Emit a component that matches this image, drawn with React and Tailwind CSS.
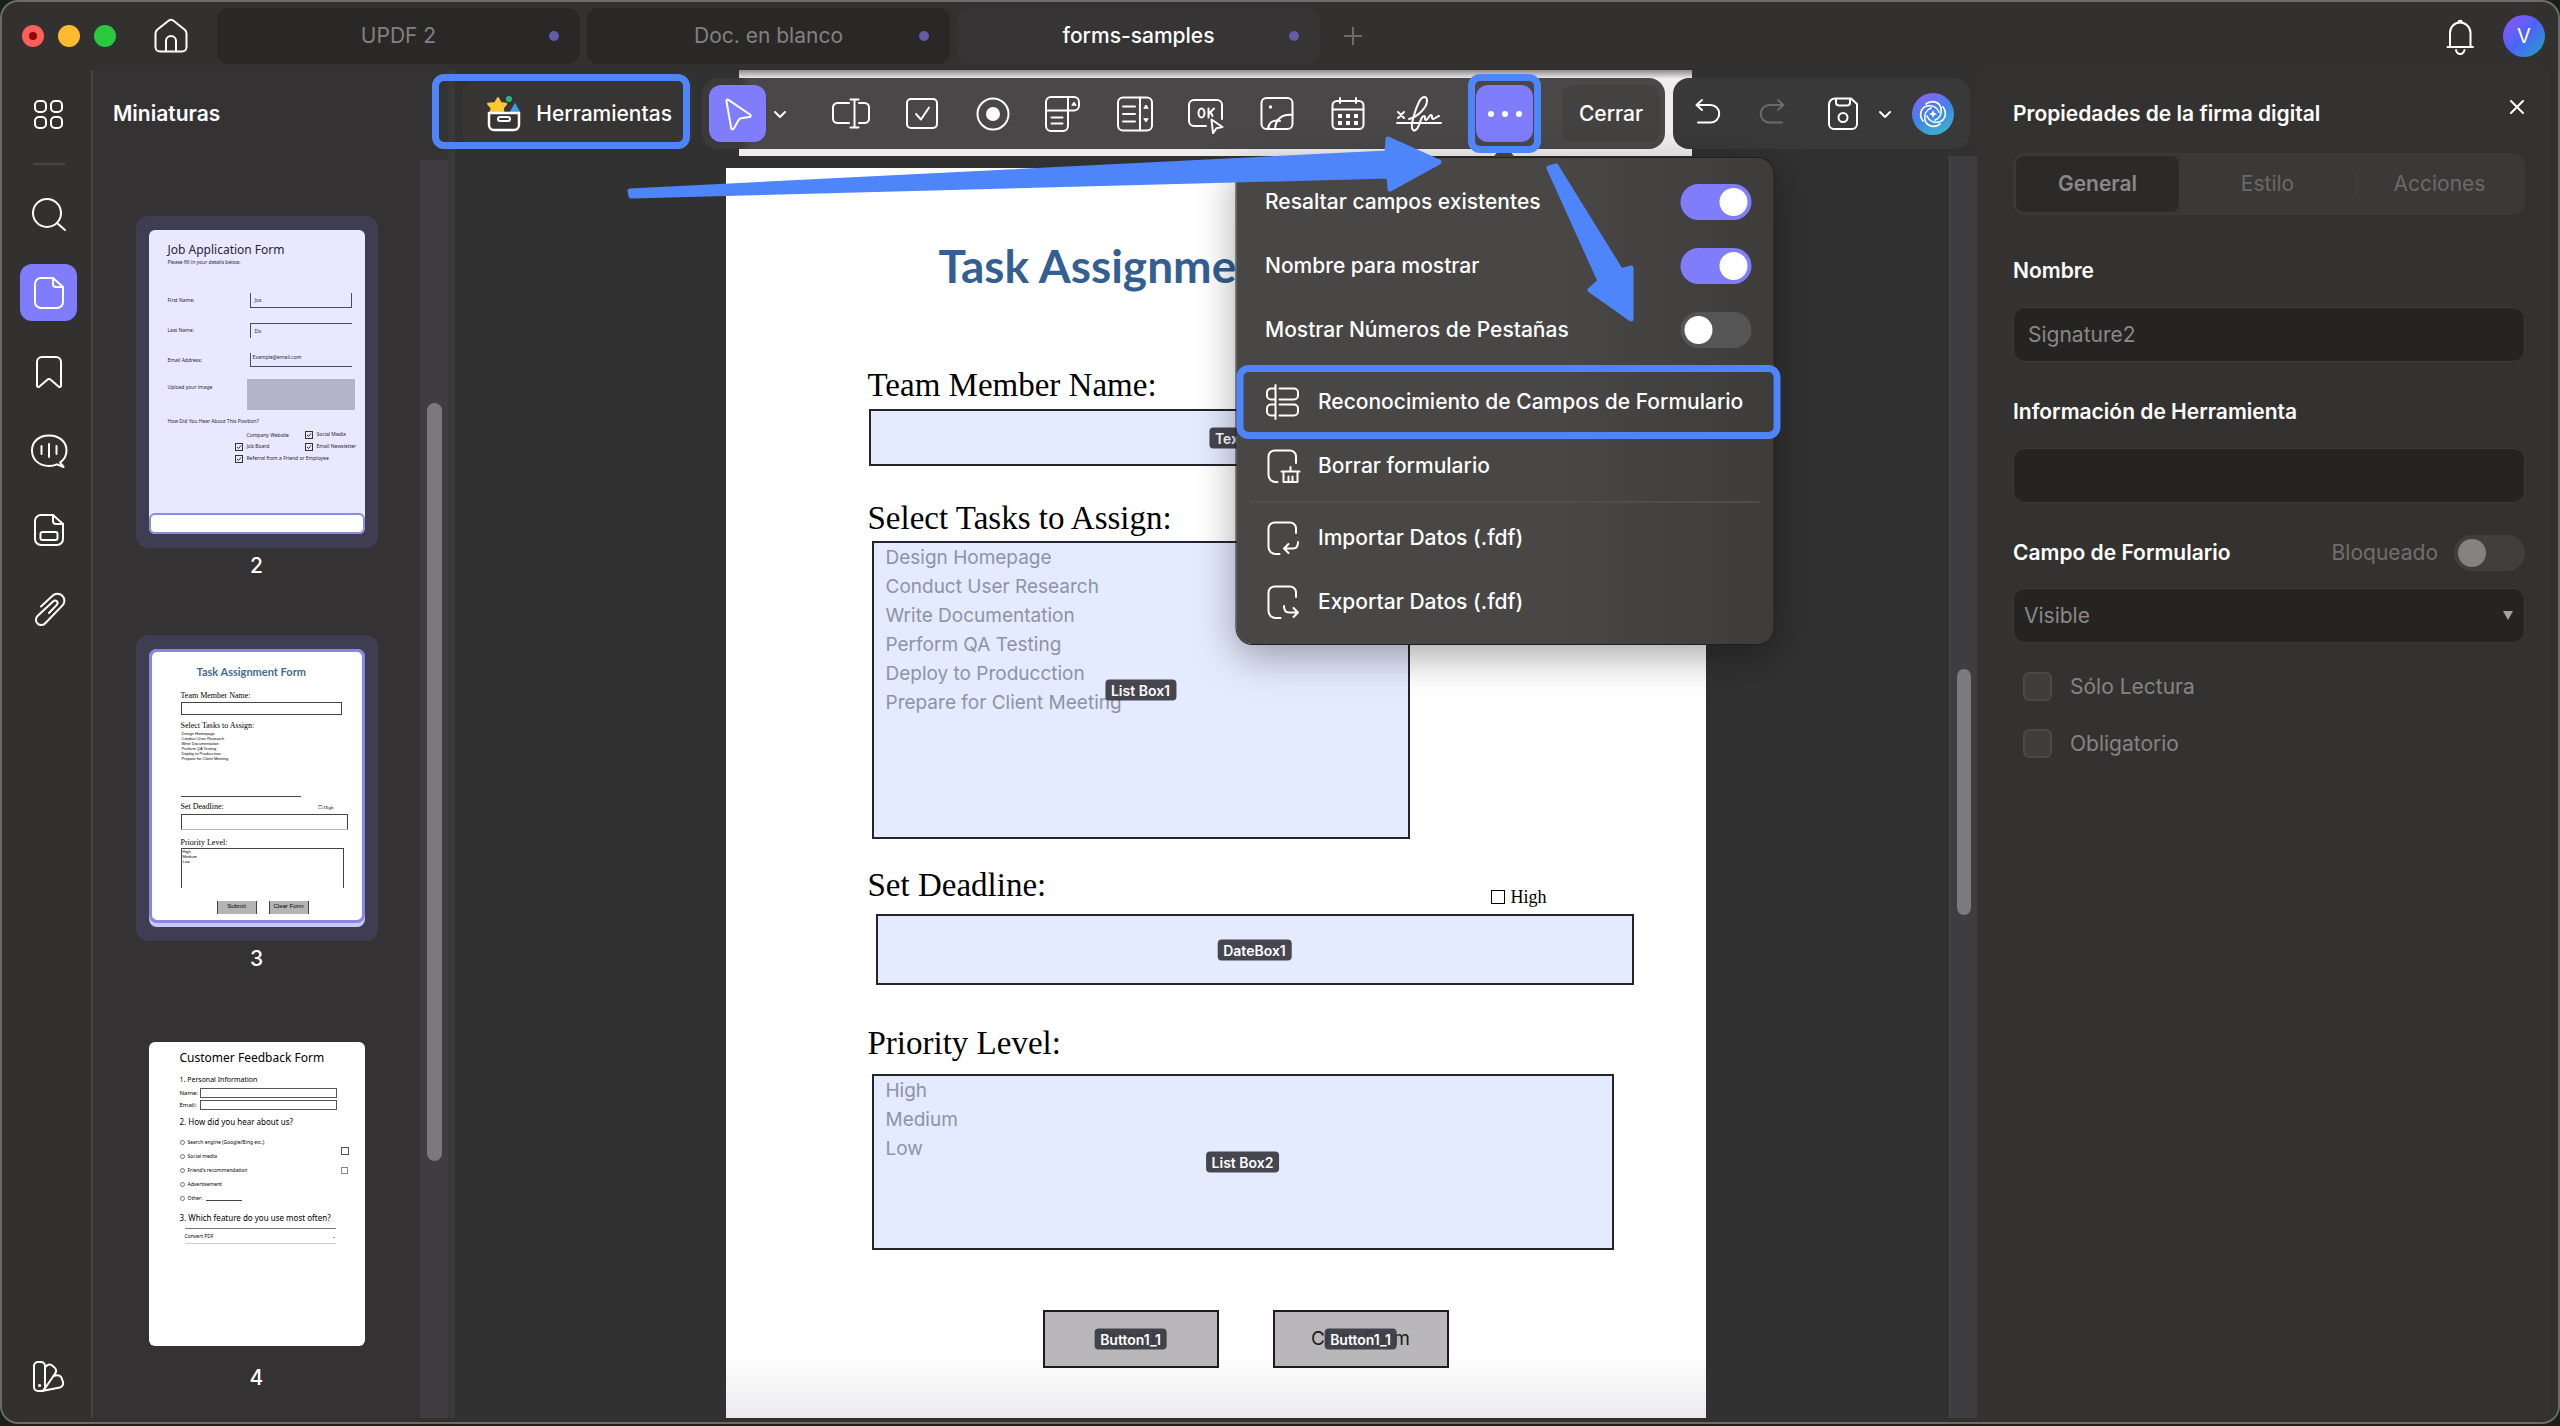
import React, { useState } from 'react';

const Icon = ({ children, className = 'w-10 h-10', strokeWidth = 2 }) => (
  <svg
    viewBox="0 0 40 40"
    className={className}
    fill="none"
    stroke="currentColor"
    strokeWidth={strokeWidth}
    strokeLinecap="round"
    strokeLinejoin="round"
    aria-hidden="true"
  >
    {children}
  </svg>
);

const HomeIcon = () => (
  <Icon>
    <path d="M4.500 17.500c0-1.500.6-2.800 1.700-3.800L17.500 4.800c1.500-1.200 3.500-1.200 5 0l11.300 8.900c1.100 1 1.700 2.300 1.700 3.800V31c0 2.800-2 4.500-4.500 4.500H9c-2.500 0-4.500-1.700-4.500-4.500z" />
    <path d="M15 35.500V25a5 5 0 0 1 10 0v10.500" />
  </Icon>
);

const GridIcon = () => (
  <Icon>
    <rect x="6" y="6" width="11" height="11" rx="4" />
    <rect x="22" y="6" width="11" height="11" rx="4" />
    <rect x="6" y="22" width="11" height="11" rx="4" />
    <rect x="22" y="22" width="11" height="11" rx="4" />
  </Icon>
);

const SearchIcon = () => (
  <Icon>
    <circle cx="18" cy="19" r="14" />
    <path d="M28 29l8 7" />
  </Icon>
);

const PageIcon = () => (
  <Icon>
    <path d="M24 5H12a6 6 0 0 0-6 6v18a6 6 0 0 0 6 6h16a6 6 0 0 0 6-6V14z" />
    <path d="M24 5v6a3 3 0 0 0 3 3h7" />
  </Icon>
);

const BookmarkIcon = () => (
  <Icon>
    <path d="M8 10a5 5 0 0 1 5-5h14a5 5 0 0 1 5 5v23.500c0 1.500-1.200 2-2.200 1.200L22 28c-1.300-1.200-2.700-1.200-4 0l-7.800 6.700c-1 .8-2.200.3-2.200-1.200z" />
  </Icon>
);

const CommentIcon = () => (
  <Icon>
    <path d="M31 31.500c3.800-2.600 6.500-7 6.500-12C37.500 10.500 30 4.500 20 4.500S3 10.500 3 19.500 10 35 20 35c2.800 0 5.500-.6 8-1.700L34.500 36c-.8-1.500-2.500-3-3.500-4.500z" />
    <path d="M12.500 15v8M20 13v13M27.500 15v8" />
  </Icon>
);

const FieldPageIcon = () => (
  <Icon>
    <path d="M24 5H12a6 6 0 0 0-6 6v18a6 6 0 0 0 6 6h16a6 6 0 0 0 6-6V14z" />
    <path d="M24 5v6a3 3 0 0 0 3 3h7" />
    <rect x="11.500" y="22" width="17" height="8" rx="2" />
  </Icon>
);

const ClipIcon = () => (
  <Icon>
    <path d="M12 17.500L23.500 6.800a7 7 0 0 1 9.800 0c2.800 2.800 2.800 7 0 9.800L16 34.500a5.200 5.200 0 0 1-7.500 0 5.200 5.200 0 0 1 0-7.500L24 12.500c1.200-1.200 2.800-1.200 3.800-.2s1 2.600-.2 3.800L20 24" />
  </Icon>
);

const SwatchIcon = () => (
  <Icon>
    <rect x="5" y="5" width="11" height="29" rx="4" />
    <path d="M16 10.500c3-3.800 5.500-3.600 7.500-1.800l2.300 2.200c1.800 1.800 1.700 3.800.2 5.800L14.500 33.500" />
    <path d="M24.500 19c4-1.500 7-.8 8.200 2.200l1.200 3.500c.9 2.800-.5 5-3 5.800L13 34" />
    <path d="M10.500 28.500h.1" strokeWidth="3" />
  </Icon>
);

const BellIcon = () => (
  <Icon>
    <path d="M10 31V17c0-6 4.500-10.500 10-10.500S30.500 11 30.500 17v14M7.500 31H33" />
    <path d="M16 34c.5 2.500 2 4 4.200 4s3.700-1.500 4.300-4M18.500 6.500a1.700 1.700 0 1 1 3.500 0" />
  </Icon>
);

const ToolboxIcon = () => (
  <svg viewBox="0 0 40 40" className="w-10 h-10" fill="none" aria-hidden="true">
    <path d="M14 4l2.600 5 5.600.8-3.400 4.200.6 4.500H6.500l1.200-4.500L4 9.800 11.200 9z" fill="#ffc832" stroke="#ffc832" strokeWidth="2" strokeLinejoin="round" />
    <circle cx="25" cy="5" r="3" fill="#2fb58b" />
    <path d="M31 9.500l5 9H26z" fill="#3f9be8" stroke="#3f9be8" strokeWidth="1" strokeLinejoin="round" />
    <path d="M5 19h30v12a5 5 0 0 1-5 5H10a5 5 0 0 1-5-5z" fill="#363534" stroke="#fff" strokeWidth="2.500" strokeLinejoin="round" />
    <rect x="14" y="23" width="12" height="4" rx="2" stroke="#fff" strokeWidth="2" />
  </svg>
);

const CursorIcon = () => (
  <Icon>
    <path d="M8.500 7.500c-.4-1.500.6-2.300 1.900-1.700L32 20.500c1.200.9.9 2.300-.6 2.500l-8.400 1.300c-1 .1-1.700.6-2.200 1.400l-5 8.800c-.8 1.400-2.300 1.200-2.600-.4z" />
  </Icon>
);

const TextFieldIcon = () => (
  <Icon>
    <path d="M18 9H6.500A4.500 4.500 0 0 0 2 13.500v11A4.500 4.500 0 0 0 6.500 29H18M28 9h5.500a4.500 4.500 0 0 1 4.500 4.500v11a4.500 4.500 0 0 1-4.500 4.500H28M23.500 6v27M19.500 5.500h8M19.500 33.500h8" />
  </Icon>
);

const CheckFieldIcon = () => (
  <Icon>
    <rect x="5" y="5" width="30" height="29" rx="4" />
    <path d="M14 20l5 5.500L27 13.500" />
  </Icon>
);

const RadioFieldIcon = () => (
  <Icon>
    <circle cx="20" cy="20" r="15.500" />
    <circle cx="20" cy="20" r="7" fill="currentColor" stroke="none" />
  </Icon>
);

const ComboIcon = () => (
  <Icon>
    <path d="M24 16.500V32a5 5 0 0 1-5 5H7a5 5 0 0 1-5-5V8a5 5 0 0 1 5-5h23a5 5 0 0 1 5 5v3.500a5 5 0 0 1-5 5H2M24 3v13.500M7.500 23.500h11M7.500 29.500h11" />
    <path d="M28 11l2-3 2 3z" fill="currentColor" strokeWidth="1" />
  </Icon>
);

const ListIcon = () => (
  <Icon>
    <rect x="3" y="3.500" width="34" height="33" rx="5" />
    <path d="M25 3.500v33M8 12.500h12M8 20h12M8 27.500h12" />
    <path d="M29 14l2-3 2 3zM29 25l2 3 2-3z" fill="currentColor" strokeWidth="1" />
  </Icon>
);

const ButtonFieldIcon = () => (
  <Icon>
    <path d="M20 32H8a5 5 0 0 1-5-5V11a5 5 0 0 1 5-5h23a5 5 0 0 1 5 5v14" />
    <ellipse cx="15.500" cy="19" rx="3" ry="4.500" />
    <path d="M22.500 14.500v9M28 14.500l-5 5M24.500 18l2 4" />
    <path d="M25.500 25.500l11 7.500-6 1.200-3.500 5z" />
  </Icon>
);

const ImageFieldIcon = () => (
  <Icon>
    <rect x="4.500" y="4" width="31" height="31" rx="5" />
    <path d="M11 35c.5-6.500 5-9.500 12-8M18 35c.6-10 7-15 17.500-14" />
    <circle cx="13.500" cy="13" r="1.700" fill="currentColor" stroke="none" />
  </Icon>
);

const CalendarIcon = () => (
  <Icon>
    <rect x="4.500" y="7" width="31" height="28" rx="4.500" />
    <path d="M4.500 15.500h31M12 4v5M28 4v5" />
    <g fill="currentColor" stroke="none">
      <rect x="10" y="20" width="4" height="4" />
      <rect x="18" y="20" width="4" height="4" />
      <rect x="26" y="20" width="4" height="4" />
      <rect x="10" y="27" width="4" height="4" />
      <rect x="18" y="27" width="4" height="4" />
      <rect x="26" y="27" width="4" height="4" />
    </g>
  </Icon>
);

const SignatureIcon = () => (
  <svg viewBox="0 0 48 40" className="w-12 h-10" fill="none" stroke="currentColor" strokeWidth="2" strokeLinecap="round" strokeLinejoin="round" aria-hidden="true">
    <path d="M2 29h44M3 18l6 6M9 18l-6 6" />
    <path d="M14 25c9-2 18-12 18-18 0-6-5-5-8 1-4 8-8 22-7 26s5 3 7-3 3-9 5-9 0 4 2 4 3-5 5-5 0 4 2 4 3-2 6-3" />
  </svg>
);

const UndoIcon = () => (
  <Icon>
    <path d="M14 6l-5.500 5L14 16M9 11h13.500a8.500 8.500 0 0 1 0 17.500H10" />
  </Icon>
);

const RedoIcon = () => (
  <Icon>
    <path d="M26 6l5.500 5L26 16M31 11H17.500a8.500 8.500 0 0 0 0 17.500H30" />
  </Icon>
);

const SaveIcon = () => (
  <Icon>
    <path d="M12 4.500h16l6 5.500v20a5 5 0 0 1-5 5H11a5 5 0 0 1-5-5V10.500a6 6 0 0 1 6-6z" />
    <path d="M13 5v3.500a3 3 0 0 0 3 3h8a3 3 0 0 0 3-3V5" />
    <circle cx="20" cy="23.500" r="4.500" />
  </Icon>
);

const ChevronIcon = () => (
  <svg viewBox="0 0 16 16" className="w-4 h-4" fill="none" stroke="currentColor" strokeWidth="2" strokeLinecap="round" strokeLinejoin="round" aria-hidden="true">
    <path d="M3 6l5 5 5-5" />
  </svg>
);

const RecognizeIcon = () => (
  <Icon>
    <path d="M13 3v34M12 6.500H8.500a4 4 0 0 0-4 4v3a4 4 0 0 0 4 4H12M17 6.500h14.500a4 4 0 0 1 4 4v3a4 4 0 0 1-4 4H17M12 22.500H8.500a4 4 0 0 0-4 4v3a4 4 0 0 0 4 4H12M17 22.500h14.500a4 4 0 0 1 4 4v3a4 4 0 0 1-4 4H17" />
  </Icon>
);

const ClearFormIcon = () => (
  <Icon>
    <path d="M33.500 17v-6.500a6 6 0 0 0-6-6H12a6 6 0 0 0-6 6V29a7 7 0 0 0 7 7h2" />
    <path d="M19 25.500h18M21 25.500V36h14V25.500M28 21v4M26 30.500V36M30 30.500V36" />
  </Icon>
);

const ImportIcon = () => (
  <Icon>
    <path d="M33.500 15v-4.500a6 6 0 0 0-6-6H12a6 6 0 0 0-6 6V29a7 7 0 0 0 7 7h4" />
    <path d="M35.500 24c0 4-1.500 6.500-5 6.500h-9M26 26l-4.500 4.500L26 35" />
  </Icon>
);

const ExportIcon = () => (
  <Icon>
    <path d="M33.500 15v-4.500a6 6 0 0 0-6-6H12a6 6 0 0 0-6 6V29a7 7 0 0 0 7 7h5" />
    <path d="M21.500 24c0 4 1.500 6.500 5 6.500h9M31 26l4.500 4.500L31 35" />
  </Icon>
);

const AssistantLogo = () => (
  <svg viewBox="0 0 44 44" className="w-11 h-11" fill="none" aria-hidden="true">
    <defs>
      <linearGradient id="assistant" x1="0.200" y1="0" x2="0.700" y2="1">
        <stop offset="0" stopColor="#8a63f5" />
        <stop offset="0.500" stopColor="#3f83ee" />
        <stop offset="1" stopColor="#3fb4c4" />
      </linearGradient>
    </defs>
    <circle cx="22" cy="22" r="21" fill="url(#assistant)" />
    <g stroke="#fff" strokeWidth="1.700" strokeLinecap="round">
      <path d="M15 12c5-4 13-3 15 4 1 5-1 10-6 12" />
      <path d="M32 15c4 5 3 13-4 15-5 1-10-1-12-6" />
      <path d="M29 32c-5 4-13 3-15-4-1-5 1-10 6-12" />
      <path d="M12 29c-4-5-3-13 4-15 5-1 10 1 12 6" />
    </g>
    <path d="M22 18l1.200 2.800L26 22l-2.800 1.200L22 26l-1.200-2.800L18 22l2.800-1.200z" fill="#fff" />
  </svg>
);

const TABS = [
  { id: 'updf', title: 'UPDF 2', active: false },
  { id: 'blank', title: 'Doc. en blanco', active: false },
  { id: 'forms', title: 'forms-samples', active: true }
];

const FIELD_TOOLS = [
  { id: 'text', label: 'Campo de texto', icon: TextFieldIcon },
  { id: 'check', label: 'Casilla', icon: CheckFieldIcon },
  { id: 'radio', label: 'Botón de radio', icon: RadioFieldIcon },
  { id: 'combo', label: 'Lista desplegable', icon: ComboIcon },
  { id: 'list', label: 'Cuadro de lista', icon: ListIcon },
  { id: 'button', label: 'Botón', icon: ButtonFieldIcon },
  { id: 'image', label: 'Imagen', icon: ImageFieldIcon },
  { id: 'date', label: 'Fecha', icon: CalendarIcon },
  { id: 'sign', label: 'Firma', icon: SignatureIcon }
];

const TitleBar = () => (
  <header className="flex items-center h-[68px] pl-5 pr-[13px] shrink-0">
    <div className="flex gap-[14px]">
      <span className="w-[22px] h-[22px] rounded-full bg-[#fe5f58] flex items-center justify-center">
        <span className="w-2 h-2 rounded-full bg-[#8c0b05]"></span>
      </span>
      <span className="w-[22px] h-[22px] rounded-full bg-[#febb2e]"></span>
      <span className="w-[22px] h-[22px] rounded-full bg-[#29c83f]"></span>
    </div>
    <button aria-label="Inicio" className="ml-[35px] text-white">
      <HomeIcon />
    </button>
    <nav className="ml-[26px] flex items-center gap-[7px]">
      {TABS.map((tab) => (
        <button
          key={tab.id}
          className={`flex items-center w-[363px] h-[56px] rounded-xl pl-[31px] pr-[21px] text-[21px] ${
            tab.active ? 'bg-[#363434] text-white font-medium' : 'bg-[#292827] text-[#83817f]'
          }`}
        >
          <span className="flex-1 text-center">{tab.title}</span>
          <span className="w-[10px] h-[10px] rounded-full bg-[#625ca9]"></span>
        </button>
      ))}
    </nav>
    <button aria-label="Nueva pestaña" className="ml-6 text-[#6d6c6a]">
      <svg viewBox="0 0 18 18" className="w-[18px] h-[18px]" stroke="currentColor" strokeWidth="2" aria-hidden="true">
        <path d="M9 0v18M0 9h18" />
      </svg>
    </button>
    <button aria-label="Notificaciones" className="ml-auto text-white">
      <BellIcon />
    </button>
    <button className="ml-[23px] w-[42px] h-[42px] rounded-full bg-linear-to-br from-[#8d55f5] via-[#4a63f7] to-[#1b9fc0] text-white text-xl">
      V
    </button>
  </header>
);

const RailButton = ({ label, active, children }) => (
  <button
    aria-label={label}
    className={`w-[57px] h-[57px] rounded-xl flex items-center justify-center text-white ${active ? 'bg-[#7f7dfc]' : ''}`}
  >
    {children}
  </button>
);

const Rail = () => (
  <aside className="w-[91px] shrink-0 flex flex-col items-center pt-[16px] pb-[13px] pl-1 bg-[#32312f] border-r-2 border-[#454443]">
    <RailButton label="Organizar"><GridIcon /></RailButton>
    <div className="w-8 h-[2px] bg-[#474645] mt-5"></div>
    <div className="flex flex-col gap-[22px] mt-5">
      <RailButton label="Buscar"><SearchIcon /></RailButton>
      <RailButton label="Miniaturas" active><PageIcon /></RailButton>
      <RailButton label="Marcadores"><BookmarkIcon /></RailButton>
      <RailButton label="Comentarios"><CommentIcon /></RailButton>
      <RailButton label="Campos"><FieldPageIcon /></RailButton>
      <RailButton label="Adjuntos"><ClipIcon /></RailButton>
    </div>
    <div className="mt-auto">
      <RailButton label="Temas"><SwatchIcon /></RailButton>
    </div>
  </aside>
);

const TinyCheck = ({ children }) => (
  <span className="flex items-center gap-1 h-3">
    <svg viewBox="0 0 8 8" className="w-2 h-2" fill="none" stroke="#333" aria-hidden="true">
      <rect x="0.500" y="0.500" width="7" height="7" />
      <path d="M2 4l1.500 1.500L6 2.500" />
    </svg>
    {children}
  </span>
);

const JobThumb = () => (
  <div className="h-full rounded-md bg-[#eae8fe] overflow-hidden flex flex-col font-['Noto_Sans'] text-[#26243a]">
    <div className="pl-[19px] pr-[10px] pt-[10px] flex-1">
      <p className="text-[12px] leading-5">Job Application Form</p>
      <p className="text-[5px] leading-[5px]">Please fill in your details below.</p>
      <div className="grid grid-cols-[82px_102px] text-[5px] leading-[14px] mt-7 gap-y-[15px]">
        <span>First Name:</span>
        <span className="border-l border-b border-r border-[#4b4a60] pl-1">Jos</span>
        <span>Last Name:</span>
        <span className="border-l border-t border-[#4b4a60] pl-1">Do</span>
        <span>Email Address:</span>
        <span className="border-l border-b border-[#4b4a60] pl-[2px] leading-[8px]">Example@email.com</span>
      </div>
      <div className="flex justify-between text-[5px] leading-4 mt-3">
        <span>Upload your image</span>
        <span className="w-[108px] h-[31px] bg-[#b5b3c8]"></span>
      </div>
      <p className="text-[5px] leading-[8px] mt-[7px]">How Did You Hear About This Position?</p>
      <div className="grid grid-cols-[70px_60px] pl-[67px] text-[5px] mt-1">
        <span className="pl-3 h-3 leading-3">Company Website</span>
        <TinyCheck>Social Media</TinyCheck>
        <TinyCheck>Job Board</TinyCheck>
        <TinyCheck>Email Newsletter</TinyCheck>
        <span className="col-span-2"><TinyCheck>Referral from a Friend or Employee</TinyCheck></span>
      </div>
    </div>
    <div className="h-[21px] bg-white border-2 border-[#8d8be0] rounded-md"></div>
  </div>
);

const TaskThumb = () => (
  <div className="h-full rounded-lg bg-[#c9c7fb] pb-[4px]">
    <div className="h-full rounded-lg bg-white border-3 border-[#8985e0] pl-[29px] pt-[11px] text-black font-['Liberation_Serif']">
      <p className="pl-4 text-[11px] leading-[18px] font-bold text-[#456a91] font-['Lato']">Task Assignment Form</p>
      <p className="text-[8px] leading-[10px] mt-[10px]">Team Member Name:</p>
      <div className="w-[161px] h-[13px] border border-[#444] mt-[1px]"></div>
      <p className="text-[8px] leading-[10px] mt-[6px]">Select Tasks to Assign:</p>
      <div className="w-[120px] h-[66px] border-b border-[#444] pl-px text-[4px] leading-[5px] font-['Liberation_Sans']">
        {TASKS.map((task) => (
          <p key={task}>{task}</p>
        ))}
      </div>
      <div className="flex justify-between pr-7 mt-[5px]">
        <p className="text-[8px] leading-[10px]">Set Deadline:</p>
        <p className="text-[5px] leading-[12px]">☐ High</p>
      </div>
      <div className="w-[167px] h-[16px] border border-[#444] border-b-[#bbb]"></div>
      <p className="text-[8px] leading-[10px] mt-2">Priority Level:</p>
      <div className="w-[163px] h-[40px] border border-b-0 border-[#444] pl-px text-[4px] leading-[5px] font-['Liberation_Sans']">
        {LEVELS.map((level) => (
          <p key={level}>{level}</p>
        ))}
      </div>
      <div className="flex gap-3 pl-9 mt-[13px] text-[6px] leading-[11px] text-center font-['Liberation_Sans']">
        <span className="w-10 h-[13px] bg-[#b5b4b5] border-x border-[#444]">Submit</span>
        <span className="w-10 h-[13px] bg-[#b5b4b5] border-x border-[#444]">Clear Form</span>
      </div>
    </div>
  </div>
);

const SOURCES = ['Search engine (Google/Bing etc.)', 'Social media', 'Friend’s recommendation', 'Advertisement'];

const FeedbackThumb = () => (
  <div className="h-full rounded-md bg-white pl-[31px] pr-[16px] pt-[6px] text-black font-['Noto_Sans']">
    <p className="text-[12px] leading-5">Customer Feedback Form</p>
    <p className="text-[7px] leading-[10px] mt-[7px]">1. Personal Information</p>
    <div className="grid grid-cols-[20px_137px] gap-y-[2px] text-[6px] leading-[10px] mt-[3px]">
      <span>Name:</span>
      <span className="border border-[#555]"></span>
      <span>Email:</span>
      <span className="border border-[#555]"></span>
    </div>
    <p className="text-[8px] leading-3 mt-[6px]">2. How did you hear about us?</p>
    <div className="flex justify-between mt-[7px]">
      <div className="text-[5px] leading-[14px]">
        {SOURCES.map((source) => (
          <p key={source} className="flex items-center gap-[3px]">
            <span className="w-[5px] h-[5px] rounded-full border border-[#777]"></span>
            {source}
          </p>
        ))}
        <p className="flex items-center gap-[3px]">
          <span className="w-[5px] h-[5px] rounded-full border border-[#777]"></span>
          Other: <span className="w-9 h-[6px] border-b border-[#444]"></span>
        </p>
      </div>
      <div className="pt-[12px]">
        <div className="w-2 h-2 border border-[#555]"></div>
        <div className="w-[7px] h-[7px] border border-[#888] mt-3"></div>
      </div>
    </div>
    <p className="text-[8px] leading-3 mt-[7px]">3. Which feature do you use most often?</p>
    <div className="ml-[5px] w-[151px] h-[16px] mt-[4px] border-y border-t-[#777] border-b-[#ccc] flex justify-between text-[5px] leading-[14px]">
      <span>Convert PDF</span>
      <span>⌄</span>
    </div>
  </div>
);

const Thumbnail = ({ number, selected, className, children }) => (
  <li className="flex flex-col items-center">
    <div className={`w-[242px] px-[13px] py-[14px] rounded-xl ${selected ? 'bg-[#3e3d52]' : ''} ${className}`}>{children}</div>
    <span className="mt-1 text-[21px] leading-7 font-medium text-white">{number}</span>
  </li>
);

const Thumbnails = () => (
  <aside className="w-[362px] shrink-0 flex flex-col bg-[#343233] border-r-[7px] border-[#3a393a]">
    <h2 className="pl-5 pt-[30px] text-[21px] leading-7 font-semibold text-white">Miniaturas</h2>
    <div className="flex flex-1 min-h-0 mt-8">
      <ul className="flex-1 flex flex-col gap-[55px] pt-[56px]">
        <Thumbnail number={2} selected className="h-[332px]"><JobThumb /></Thumbnail>
        <Thumbnail number={3} selected className="h-[306px]"><TaskThumb /></Thumbnail>
        <Thumbnail number={4} className="h-[332px]"><FeedbackThumb /></Thumbnail>
      </ul>
      <div className="w-7 pt-[243px] bg-[#3f3d40] flex justify-center">
        <div className="w-[15px] h-[758px] rounded-full bg-[#7b797b]"></div>
      </div>
    </div>
  </aside>
);

const Highlight = ({ className }) => (
  <span className={`absolute border-[7px] border-[#4f85fa] rounded-xl pointer-events-none ${className}`}></span>
);

const Switch = (props) => (
  <input
    type="checkbox"
    role="switch"
    className="appearance-none shrink-0 flex items-center w-[71px] h-9 px-1 rounded-full bg-[#565555] checked:bg-[#7f7dfc] checked:justify-end disabled:bg-[#413f3e] before:content-[''] before:w-7 before:h-7 before:rounded-full before:bg-white disabled:before:bg-[#858382]"
    {...props}
  />
);

const SwitchRow = ({ label, checked }) => {
  const [on, setOn] = useState(checked);
  return (
    <label className="flex items-center justify-between h-16 pl-[29px] pr-[22px]">
      {label}
      <Switch checked={on} onChange={() => setOn(!on)} />
    </label>
  );
};

const MenuItem = ({ icon: IconComponent, label }) => (
  <button role="menuitem" className="flex items-center gap-4 w-full h-16 pl-[26px] text-left whitespace-nowrap">
    <IconComponent />
    {label}
  </button>
);

const MoreMenu = () => (
  <div
    role="menu"
    className="absolute left-1/2 -translate-x-1/2 top-[73px] w-[537px] pt-3 pb-[10px] rounded-2xl bg-linear-to-r from-[#484746] from-60% to-[#3d3c3b] shadow-[0_0_0_1px_#1f1f1f,0_12px_40px_rgba(0,0,0,0.35)] text-[21px] font-medium text-white"
  >
    <SwitchRow label="Resaltar campos existentes" checked />
    <SwitchRow label="Nombre para mostrar" checked />
    <SwitchRow label="Mostrar Números de Pestañas" checked={false} />
    <div className="relative mt-2">
      <MenuItem icon={RecognizeIcon} label="Reconocimiento de Campos de Formulario" />
      <Highlight className="left-0 -right-[7px] -top-[5px] h-[74px]" />
    </div>
    <MenuItem icon={ClearFormIcon} label="Borrar formulario" />
    <div className="mx-[14px] my-[3px] h-[2px] bg-[#4f4e4c]"></div>
    <MenuItem icon={ImportIcon} label="Importar Datos (.fdf)" />
    <MenuItem icon={ExportIcon} label="Exportar Datos (.fdf)" />
  </div>
);

const Divider = () => <span className="w-[2px] h-6 bg-[#525150]"></span>;

const Toolbar = () => (
  <div className="absolute inset-x-0 top-2 z-10 flex justify-center">
    <div className="relative flex gap-2 h-[71px] text-white">
      <div className="relative w-[232px]">
        <button className="flex items-center justify-end gap-3 w-full h-full pr-[22px] rounded-2xl bg-[#363534] text-[21px] font-medium">
          <ToolboxIcon />
          Herramientas
        </button>
        <Highlight className="-left-[30px] -top-1 w-[258px] h-[75px]" />
      </div>

      <div className="flex items-center w-[963px] pl-[7px] pr-[5px] rounded-2xl bg-linear-to-r from-[#3b3a39] from-4% to-[#494747] to-5%">
        <button aria-label="Seleccionar" className="w-[57px] h-[57px] rounded-xl bg-[#7f7dfc] flex items-center justify-center">
          <CursorIcon />
        </button>
        <button aria-label="Más modos" className="px-[6px]"><ChevronIcon /></button>
        <span className="ml-[13px]"><Divider /></span>
        <div className="flex ml-2">
          {FIELD_TOOLS.map((tool) => {
            const ToolIcon = tool.icon;
            return (
              <button key={tool.id} aria-label={tool.label} className="w-[71px] h-[57px] flex items-center justify-center">
                <ToolIcon />
              </button>
            );
          })}
        </div>
        <span className="ml-[6px]"><Divider /></span>
        <div className="relative ml-4">
          <button aria-label="Más" className="w-[57px] h-[57px] rounded-xl bg-[#7f7dfc] flex items-center justify-center gap-2">
            <span className="w-[6px] h-[6px] rounded-full bg-white"></span>
            <span className="w-[6px] h-[6px] rounded-full bg-white"></span>
            <span className="w-[6px] h-[6px] rounded-full bg-white"></span>
          </button>
          <svg viewBox="0 0 28 8" className="absolute left-[14px] top-[65px] w-7 h-2" fill="#484746" aria-hidden="true">
            <path d="M0 8c5 0 6-8 14-8s9 8 14 8z" />
          </svg>
          <MoreMenu />
          <Highlight className="-inset-x-2 -inset-y-[11px]" />
        </div>
        <button className="ml-auto w-[98px] h-[57px] rounded-xl bg-[#434241] text-[21px] font-medium">Cerrar</button>
      </div>

      <div className="flex items-center w-[297px] pl-[15px] rounded-2xl bg-[#3a3939]">
        <button aria-label="Deshacer"><UndoIcon /></button>
        <button aria-label="Rehacer" className="ml-6 text-[#6c6b6b]"><RedoIcon /></button>
        <span className="ml-4"><Divider /></span>
        <button aria-label="Guardar" className="ml-[15px]"><SaveIcon /></button>
        <button aria-label="Opciones de guardado" className="ml-[14px]"><ChevronIcon /></button>
        <button aria-label="Asistente" className="ml-[18px]"><AssistantLogo /></button>
      </div>

      {/* Guide arrows */}
      <svg
        viewBox="0 0 1020 200"
        className="absolute left-[165px] top-[52px] w-[1020px] h-[200px] pointer-events-none"
        fill="#4f85fa"
        stroke="#4f85fa"
        strokeWidth="5"
        strokeLinejoin="round"
        aria-hidden="true"
      >
        <path d="M3 61L760 23L761 9L812 32L763 59L762 46L4 66z" />
        <path d="M922 38L929 36L994 141L1004 138L1004 189L963 160L973 151z" />
      </svg>
    </div>
  </div>
);

const TASKS = [
  'Design Homepage',
  'Conduct User Research',
  'Write Documentation',
  'Perform QA Testing',
  'Deploy to Producction',
  'Prepare for Client Meeting'
];

const LEVELS = ['High', 'Medium', 'Low'];

const FieldTag = ({ children }) => (
  <span className="absolute left-1/2 top-1/2 -translate-x-1/2 -translate-y-1/2 px-[6px] rounded-sm bg-[#3b3c44f0] text-white text-[14px] leading-[21px] font-semibold whitespace-nowrap">
    {children}
  </span>
);

const FieldLabel = ({ htmlFor, children }) => (
  <label htmlFor={htmlFor} className="block font-['Liberation_Serif'] text-[33px] leading-10 text-black">
    {children}
  </label>
);

const ListBox = ({ id, options, tag, className }) => (
  <div className={`relative ${className}`}>
    <select
      id={id}
      multiple
      className="appearance-none block w-full h-full overflow-hidden border-2 border-[#23252e] rounded-none bg-[#e4ebfe] pl-3 pt-[3px] text-[19px] text-[#8d93a6]"
    >
      {options.map((option) => (
        <option key={option} className="h-[29px] leading-[29px] p-0">{option}</option>
      ))}
    </select>
    <FieldTag>{tag}</FieldTag>
  </div>
);

const DocumentPage = () => (
  <section className="w-[980px] flex-1 mx-auto mt-3 pl-[142px] bg-linear-to-b from-white from-95% to-[#ebe9ec]">
    <h1 className="mt-[70px] pl-[71px] font-['Lato'] font-bold text-[46px] leading-[56px] text-[#345f92]">Task Assignment Form</h1>

    <div className="mt-[71px]">
      <FieldLabel htmlFor="member">Team Member Name:</FieldLabel>
      <div className="relative w-[728px] ml-px mt-1">
        <input id="member" type="text" className="block w-full h-[57px] px-3 border-2 border-[#23252e] bg-[#e4ebfe]" />
        <FieldTag>Text1</FieldTag>
      </div>
    </div>

    <div className="mt-8">
      <FieldLabel htmlFor="tasks">Select Tasks to Assign:</FieldLabel>
      <ListBox id="tasks" options={TASKS} tag="List Box1" className="ml-1 mt-[3px] w-[538px] h-[298px]" />
    </div>

    <div className="mt-[26px]">
      <div className="flex items-end justify-between w-[679px]">
        <FieldLabel htmlFor="deadline">Set Deadline:</FieldLabel>
        <label className="flex items-center gap-[6px] font-['Liberation_Serif'] text-lg leading-4 text-black">
          <input type="checkbox" className="appearance-none w-[14px] h-[14px] border border-black" />
          High
        </label>
      </div>
      <div className="relative ml-2 mt-[9px] w-[758px]">
        <input id="deadline" type="text" className="block w-full h-[71px] px-3 border-2 border-[#23252e] bg-[#e4ebfe]" />
        <FieldTag>DateBox1</FieldTag>
      </div>
    </div>

    <div className="mt-[38px]">
      <FieldLabel htmlFor="priority">Priority Level:</FieldLabel>
      <ListBox id="priority" options={LEVELS} tag="List Box2" className="ml-1 mt-[11px] w-[742px] h-[176px]" />
    </div>

    <div className="flex gap-[54px] pl-[175px] mt-[60px]">
      {['Submit', 'Clear Form'].map((label) => (
        <button key={label} className="relative w-[176px] h-[58px] bg-[#b9b7b9] border-2 border-[#1b1b1d] text-[19px] text-[#1b1b1d]">
          {label}
          <FieldTag>Button1_1</FieldTag>
        </button>
      ))}
    </div>
  </section>
);

const Canvas = () => (
  <main className="relative flex-1 min-w-0 flex bg-[#313131]">
    <Toolbar />
    <div className="flex-1 min-w-0 flex flex-col pl-[27px]">
      <div className="w-[953px] h-[86px] mx-auto bg-linear-to-b from-[#8e8c8d] to-[#efedee] to-10%"></div>
      <DocumentPage />
    </div>
    <div className="w-7 mt-[86px] pt-[513px] bg-[#3e3e41] border-l border-[#4a4a4b] flex justify-center">
      <div className="w-[14px] h-[246px] rounded-full bg-[#7b7b7d]"></div>
    </div>
  </main>
);

const inputClass = 'block w-full h-[55px] rounded-xl border border-[#3c3a38] bg-[#262422] text-[21px] text-[#8a8887]';

const Properties = () => (
  <aside className="w-[581px] shrink-0 pl-9 pr-[33px] pt-[30px] bg-[#343230] border-r-8 border-[#31302f]">
    <div className="-mr-2">
      <div className="flex items-start justify-between text-white">
        <h2 className="text-[21px] leading-7 font-semibold">Propiedades de la firma digital</h2>
        <button aria-label="Cerrar panel" className="mr-[1px]">
          <svg viewBox="0 0 14 14" className="w-[14px] h-[14px]" stroke="currentColor" strokeWidth="2" strokeLinecap="round" aria-hidden="true">
            <path d="M1 1l12 12M13 1L1 13" />
          </svg>
        </button>
      </div>

      <div role="tablist" className="flex items-center h-[62px] mt-[25px] p-[3px] rounded-xl bg-[#3b3937] text-[21px] text-[#6b6967]">
        <button role="tab" aria-selected="true" className="w-[163px] h-full rounded-lg bg-[#2c2a29] text-[#8a8887] font-semibold">General</button>
        <button role="tab" aria-selected="false" className="w-[177px]">Estilo</button>
        <span className="w-px h-5 bg-[#454341]"></span>
        <button role="tab" aria-selected="false" className="flex-1">Acciones</button>
      </div>

      <label htmlFor="name" className="block mt-[42px] text-[21px] leading-7 font-semibold text-white">Nombre</label>
      <input id="name" type="text" defaultValue="Signature2" className={`${inputClass} mt-[22px] px-[14px]`} />

      <label htmlFor="tooltip" className="block mt-9 text-[21px] leading-7 font-semibold text-white">Información de Herramienta</label>
      <input id="tooltip" type="text" className={`${inputClass} mt-[22px] px-[14px]`} />

      <div className="flex items-center mt-8 text-[21px]">
        <label htmlFor="visibility" className="flex-1 font-semibold text-white">Campo de Formulario</label>
        <label htmlFor="locked" className="mr-4 text-[#716f6e]">Bloqueado</label>
        <Switch id="locked" disabled />
      </div>
      <div className="relative mt-[17px]">
        <select id="visibility" className={`${inputClass} appearance-none px-[10px]`}>
          <option>Visible</option>
        </select>
        <svg viewBox="0 0 10 9" className="absolute right-3 top-[23px] w-[10px] h-[9px] pointer-events-none" fill="#a5a3a2" aria-hidden="true">
          <path d="M0 0h10L5 9z" />
        </svg>
      </div>

      <div className="flex flex-col gap-7 mt-[29px] pl-[10px] text-[21px] text-[#868483]">
        {['Sólo Lectura', 'Obligatorio'].map((label) => (
          <label key={label} className="flex items-center gap-[18px] h-[29px]">
            <input type="checkbox" className="appearance-none w-[29px] h-[29px] rounded-md border-2 border-[#4b4948] bg-[#403e3d]" />
            {label}
          </label>
        ))}
      </div>
    </div>
  </aside>
);

const App = () => (
  <div className="h-screen pb-[2px] bg-[#17201a] font-['Inter',sans-serif]">
    <div className="h-full flex flex-col rounded-[18px] border-2 border-[#6c6b6a] overflow-hidden bg-[#333130]">
      <TitleBar />
      <div className="flex-1 min-h-0 flex pb-1">
        <Rail />
        <Thumbnails />
        <Canvas />
        <Properties />
      </div>
    </div>
  </div>
);

export default App;
